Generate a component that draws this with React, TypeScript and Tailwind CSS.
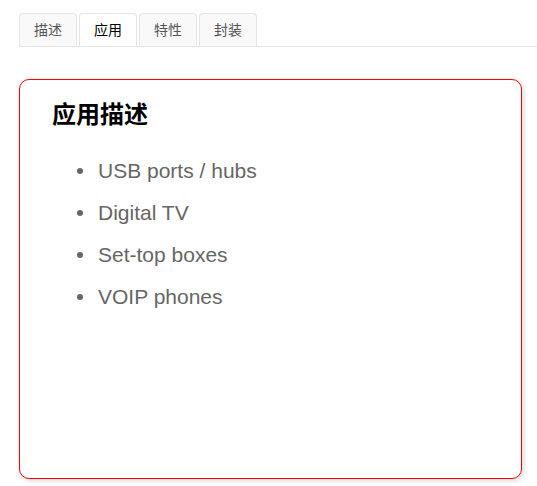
import { useState } from "react"

const tabs = ["描述", "应用", "特性", "封装"]
const items = ["USB ports / hubs", "Digital TV", "Set-top boxes", "VOIP phones"]

export default function App() {
  const [active, setActive] = useState(1)

  return (
    <div
      className="min-h-screen bg-white pt-[13px] pl-[19px]"
      style={{ fontFamily: '"Liberation Sans", Arial, "Noto Sans CJK SC", sans-serif' }}
    >
      <div className="flex gap-[2px] border-b border-[#e5e5e5]">
        {tabs.map((t, i) => (
          <button
            key={t}
            onClick={() => setActive(i)}
            className={
              i === active
                ? "w-[58px] h-[33px] -mb-px rounded-t-[4px] border border-b-0 border-[#e5e5e5] bg-white text-[14px] text-black"
                : "w-[58px] h-[33px] rounded-t-[4px] border border-b-0 border-[#e5e5e5] bg-[#f9f9f9] text-[14px] text-[#555]"
            }
          >
            {t}
          </button>
        ))}
      </div>

      <div className="mt-[32px] w-[503px] h-[400px] rounded-[10px] border border-[#ff0000] bg-white shadow-[2px_2px_5px_rgba(0,0,0,0.15)] pl-[32px] pt-[17px]">
        <h2 className="text-[24px] leading-[36px] font-bold text-black">应用描述</h2>
        <ul className="mt-[25px] flex flex-col gap-[17px]">
          {items.map((it) => (
            <li key={it} className="flex items-center text-[21px] leading-[25px] text-[#666]">
              <span className="ml-[25px] mr-[15px] w-[6px] h-[6px] rounded-full bg-[#666]" />
              {it}
            </li>
          ))}
        </ul>
      </div>
    </div>
  )
}
